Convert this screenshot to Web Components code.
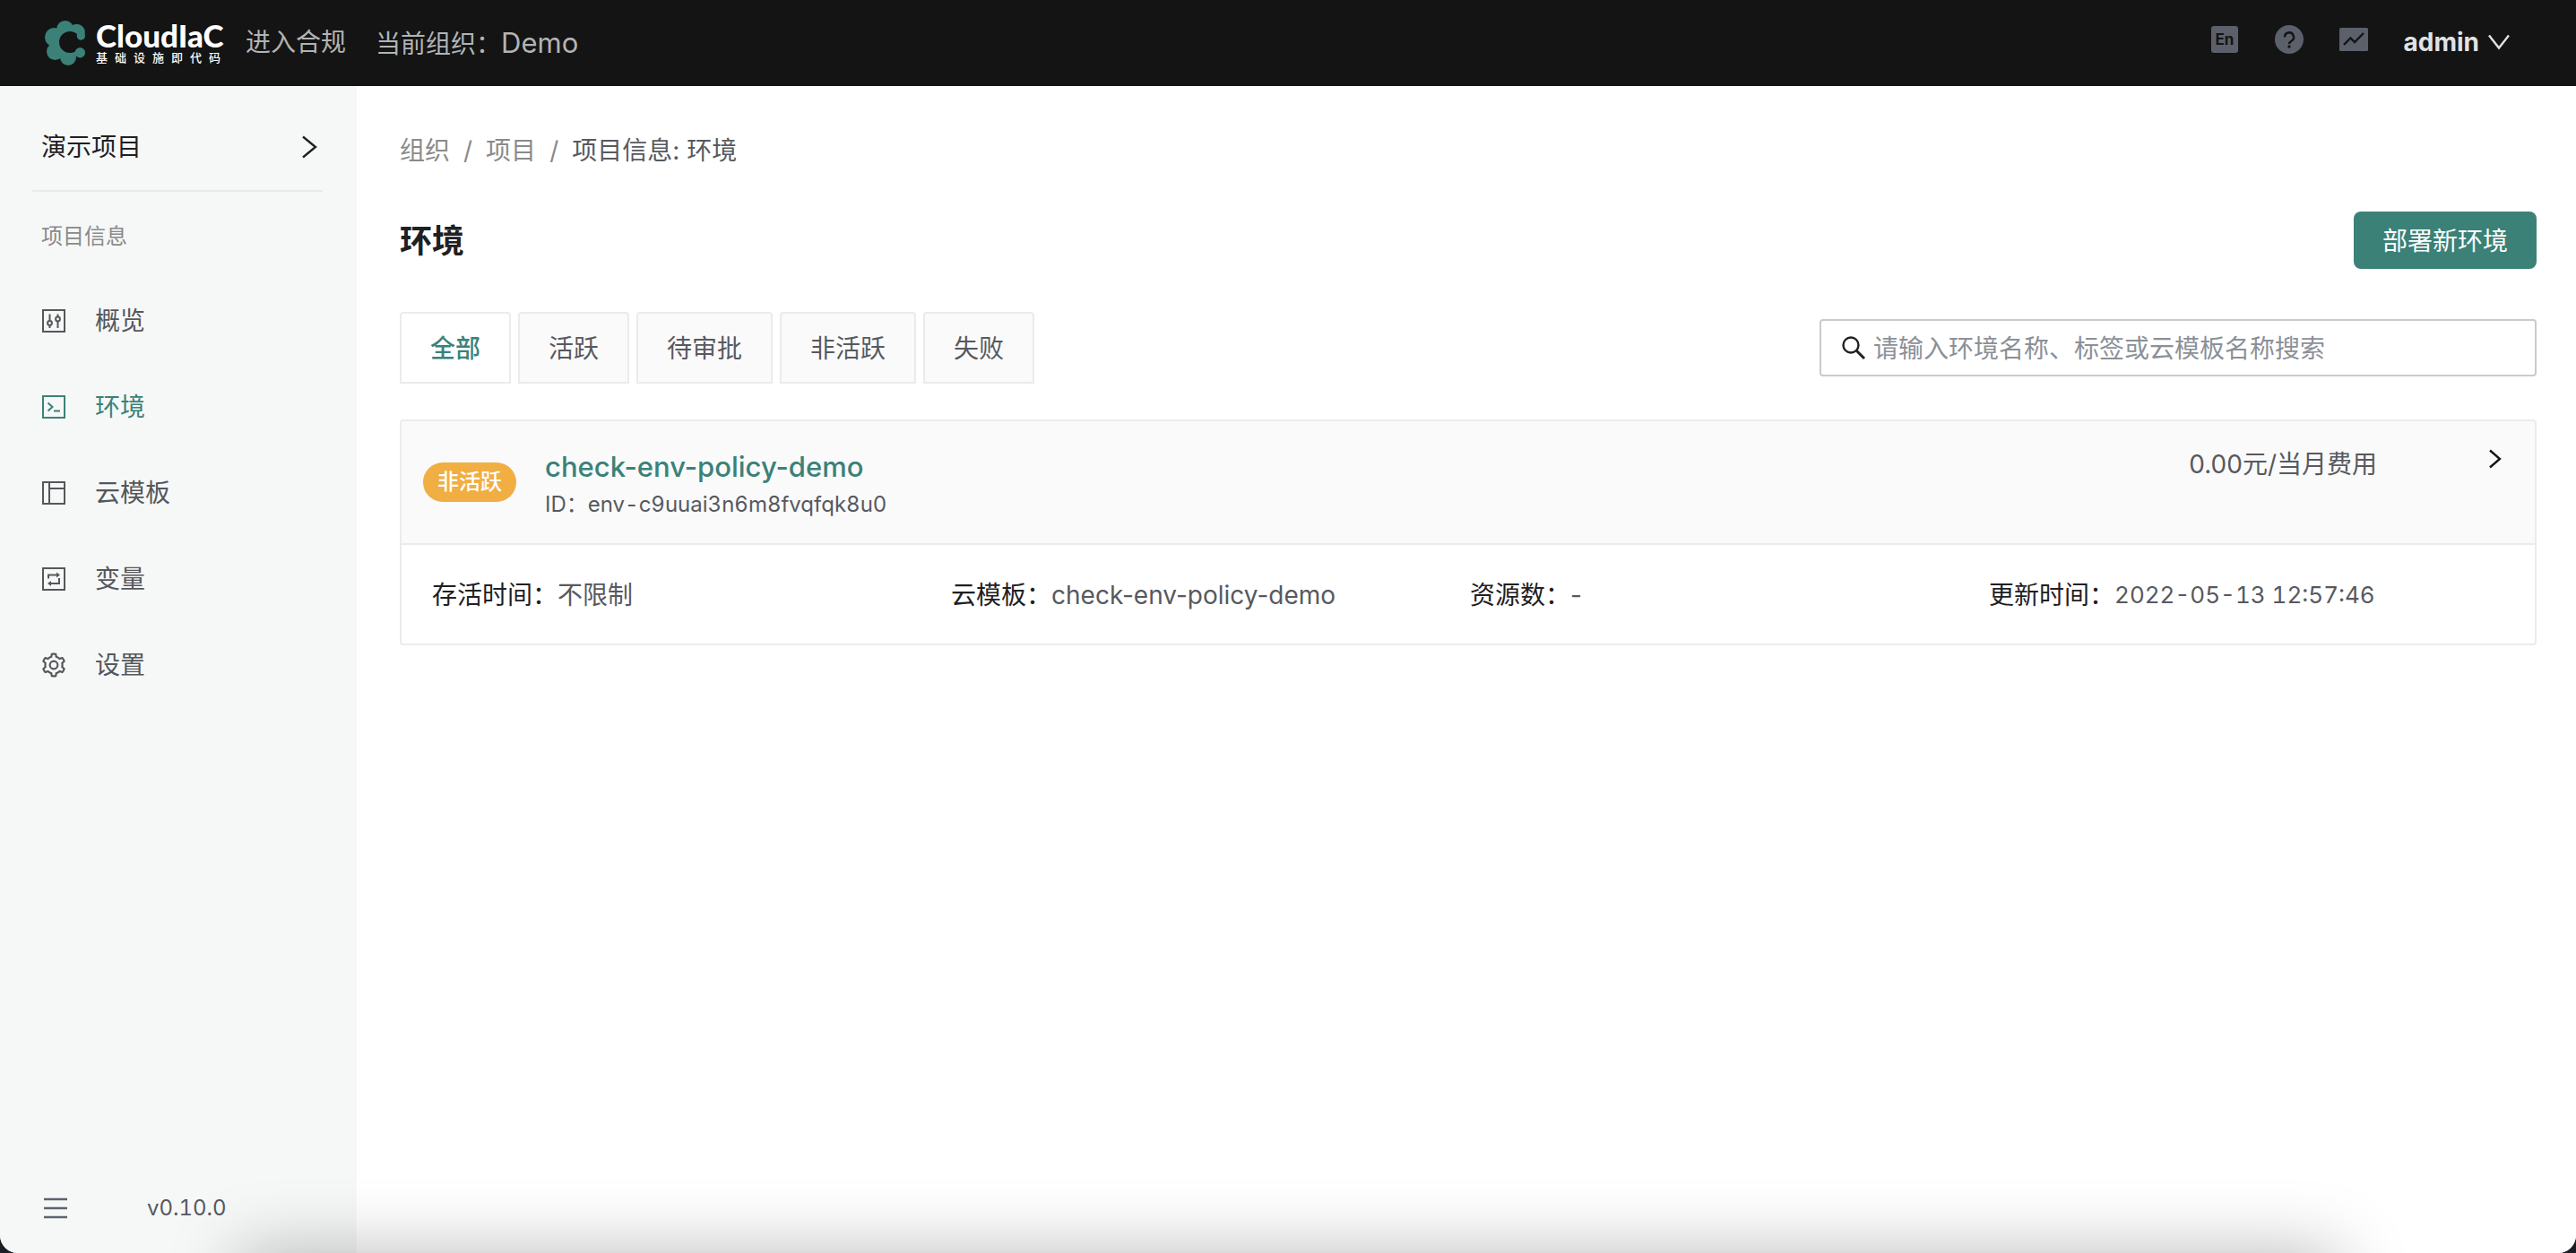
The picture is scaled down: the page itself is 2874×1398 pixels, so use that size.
<!DOCTYPE html>
<html lang="zh-CN">
<head>
<meta charset="utf-8">
<title>CloudIaC</title>
<style>
  html, body { margin: 0; height: 100%; }
  body {
    background: #1b1e25;
    font-family: Inter, "Noto Sans CJK SC", sans-serif;
    font-size: 28px;
    line-height: 44px;
    color: #57595f;
    --brand: #3b8178;
    --ink: #1f2022;
    --muted: #8a8a8a;
    --line: #ebebeb;
  }
</style>
</head>
<body>
<iac-app></iac-app>
<script>
const define = (name, html) => {
  const template = document.createElement('template');
  template.innerHTML = html;
  customElements.define(name, class extends HTMLElement {
    constructor() {
      super();
      this.attachShadow({ mode: 'open' }).append(template.content.cloneNode(true));
    }
  });
};

define('iac-logo', `
<style>
  :host { display: flex; align-items: center; gap: 11px; color: #fff; }
  svg { width: 46px; height: 50px; display: block; }
  .words { display: flex; flex-direction: column; width: 139px; padding-bottom: 2px; }
  .name { font: 900 35px/34px Lato, sans-serif; white-space: nowrap; }
  .sub { font-size: 13px; font-weight: 500; line-height: 16px; text-align: justify; text-align-last: justify; }
</style>
<svg viewBox="50 23 46 50" aria-hidden="true">
  <g fill="#3b8178">
    <circle cx="72.700" cy="32.500" r="9.500"/><circle cx="85.500" cy="36" r="9.300"/><circle cx="60.500" cy="41.500" r="10.500"/>
    <circle cx="61.500" cy="57.500" r="9.500"/><circle cx="76" cy="64" r="9"/><circle cx="76" cy="48" r="17"/>
  </g>
  <circle cx="78" cy="47" r="12" fill="#141414"/>
  <path fill="#141414" d="M84 43h12v11H84z"/>
  <circle cx="90.300" cy="40" r="4.700" fill="#3b8178"/>
  <circle cx="89.300" cy="58.700" r="5.700" fill="#3b8178"/>
</svg>
<div class="words"><span class="name">CloudIaC</span><span class="sub">基础设施即代码</span></div>
`);

define('iac-header', `
<style>
  :host { display: flex; align-items: center; justify-content: space-between; height: 96px; padding: 0 74px 0 50px; background: #141414; color: #b3b3b3; box-sizing: border-box; }
  .side { display: flex; align-items: center; }
  a { color: inherit; text-decoration: none; margin-left: 28px; padding-bottom: 2px; }
  .org { margin-left: 33px; }
  .org b { font-weight: 400; font-size: 31px; }
  button { border: 0; padding: 0; background: none; font: inherit; color: #5b606b; cursor: pointer; display: flex; align-items: center; }
  .tools { display: flex; align-items: center; gap: 40px; padding-bottom: 8px; }
  .tools svg { width: 32px; height: 32px; display: block; }
  .user { margin-left: 40px; padding-bottom: 2px; color: #e2e2e2; font-weight: 700; gap: 10px; }
</style>
<div class="side">
  <iac-logo></iac-logo>
  <a href="#compliance">进入合规</a>
  <span class="org">当前组织：<b>Demo</b></span>
</div>
<div class="side">
  <div class="tools">
    <button aria-label="English"><svg viewBox="0 0 32 32"><rect x="1" y="1" width="30" height="30" rx="3" fill="#5b606b"/><text x="16" y="22" text-anchor="middle" font-size="17" font-weight="700" fill="#141414">En</text></svg></button>
    <button aria-label="帮助"><svg viewBox="0 0 32 32"><circle cx="16" cy="16" r="16" fill="#5b606b"/><path d="M11 13.500a5 5 0 1 1 7.500 4.200c-1.800 1.100-2.500 1.700-2.500 3.300" fill="none" stroke="#141414" stroke-width="2.400"/><circle cx="16" cy="24" r="1.700" fill="#141414"/></svg></button>
    <button aria-label="监控"><svg viewBox="0 0 32 32"><rect y="3" width="32" height="26" rx="1.500" fill="#5b606b"/><path d="M5 22l7.500-7.500 4.500 4.500L27 9" fill="none" stroke="#141414" stroke-width="2.400"/></svg></button>
  </div>
  <button class="user">admin<svg width="24" height="18" viewBox="0 0 24 18" fill="none" stroke="#e2e2e2" stroke-width="2.400"><path d="M1 1.500l11 14 11-14"/></svg></button>
</div>
`);

define('nav-item', `
<style>
  :host { display: block; color: #55575a; }
  :host([active]) { color: var(--brand); }
  a { display: flex; align-items: center; gap: 32px; height: 96px; padding-left: 46px; color: inherit; text-decoration: none; }
  ::slotted(svg) { width: 28px; height: 28px; flex: none; }
</style>
<a href="#"><slot name="icon"></slot><span><slot></slot></span></a>
`);

define('side-nav', `
<style>
  :host { display: flex; flex-direction: column; width: 398px; flex: none; background: #f6f8f8; }
  .project { display: flex; align-items: center; justify-content: space-between; margin: 0 38px 0 36px; padding: 20px 6px 0 10px; height: 118px; box-sizing: border-box; border: 0; border-bottom: 2px solid #e8e9e9; background: none; font: inherit; color: var(--ink); }
  .group { padding: 28px 46px 24px; font-size: 24px; color: var(--muted); font-weight: 400; margin: 0; }
  nav svg { fill: none; stroke: currentColor; stroke-width: 2; }
  footer { margin-top: auto; display: flex; align-items: center; gap: 88px; padding: 0 48px 28px; font-size: 24px; font-variant-numeric: tabular-nums; }
  footer button { border: 0; padding: 0; background: none; display: flex; color: #5d646d; }
</style>
<button class="project">演示项目<svg width="18" height="26" viewBox="0 0 18 26" fill="none" stroke="currentColor" stroke-width="2.400"><path d="M2 1.500L16 13 2 24.500"/></svg></button>
<h2 class="group">项目信息</h2>
<nav>
  <nav-item><svg slot="icon" viewBox="0 0 28 28"><rect x="2" y="2" width="24" height="24"/><path d="M9.500 6.500v7.500M9.500 19v3M18.500 6.500v3M18.500 14v8"/><circle cx="9.500" cy="16.500" r="2.400"/><circle cx="18.500" cy="12" r="2.400"/></svg>概览</nav-item>
  <nav-item active><svg slot="icon" viewBox="0 0 28 28"><rect x="2" y="2" width="24" height="24"/><path d="M7.500 9.500l5 4.500-5 4.500M14 18.500h7"/></svg>环境</nav-item>
  <nav-item><svg slot="icon" viewBox="0 0 28 28"><rect x="2" y="2" width="24" height="24"/><path d="M9 2v24M9 9h17"/></svg>云模板</nav-item>
  <nav-item><svg slot="icon" viewBox="0 0 28 28"><rect x="2" y="2" width="24" height="24"/><path d="M8 13.500V9.500h10M20 13v6H9"/><path d="M17 6.500l4 3-4 3zM11 16l-4 3 4 3z" fill="currentColor" stroke="none"/></svg>变量</nav-item>
  <nav-item><svg slot="icon" viewBox="48 48 928 928" style="stroke:none;fill:currentColor"><path d="M924.800 625.700l-65.500-56c3.100-19 4.700-38.400 4.700-57.800s-1.600-38.800-4.700-57.800l65.500-56a32.030 32.030 0 009.300-35.200l-.9-2.600a443.740 443.740 0 00-79.700-137.900l-1.800-2.100a32.120 32.120 0 00-35.100-9.500l-81.300 28.900c-30-24.600-63.500-44-99.700-57.600l-15.700-85a32.050 32.050 0 00-25.800-25.700l-2.700-.5c-52.100-9.400-106.900-9.400-159 0l-2.700.5a32.050 32.050 0 00-25.800 25.700l-15.800 85.400a351.860 351.860 0 00-99 57.400l-81.900-29.100a32 32 0 00-35.100 9.500l-1.800 2.100a446.020 446.020 0 00-79.700 137.900l-.9 2.600c-4.500 12.500-.8 26.500 9.300 35.200l66.300 56.600c-3.100 18.800-4.600 38-4.600 57.100 0 19.200 1.500 38.400 4.600 57.100L99 625.500a32.030 32.030 0 00-9.300 35.200l.9 2.600c18.100 50.400 44.900 96.900 79.700 137.900l1.800 2.100a32.120 32.120 0 0035.100 9.500l81.900-29.100c29.800 24.500 63.100 43.900 99 57.400l15.800 85.400a32.050 32.050 0 0025.800 25.700l2.700.5a449.400 449.400 0 00159 0l2.700-.5a32.050 32.050 0 0025.800-25.700l15.700-85a350 350 0 0099.700-57.600l81.300 28.900a32 32 0 0035.100-9.500l1.800-2.100c34.800-41.100 61.600-87.500 79.700-137.900l.9-2.600c4.500-12.300.8-26.300-9.300-35zM788.300 465.900c2.500 15.100 3.800 30.600 3.800 46.100s-1.300 31-3.800 46.100l-6.600 40.100 74.700 63.900a370.030 370.030 0 01-42.600 73.600L721 702.800l-31.400 25.800c-23.900 19.600-50.500 35-79.300 45.800l-38.100 14.300-17.900 97a377.500 377.500 0 01-85 0l-17.900-97.200-37.800-14.500c-28.500-10.800-55-26.200-78.700-45.700l-31.400-25.900-93.400 33.200c-17-22.900-31.200-47.600-42.600-73.600l75.500-64.500-6.500-40c-2.400-14.900-3.700-30.300-3.700-45.500 0-15.300 1.200-30.600 3.700-45.500l6.500-40-75.500-64.500c11.300-26.100 25.600-50.700 42.600-73.600l93.400 33.200 31.400-25.900c23.700-19.500 50.200-34.900 78.700-45.700l37.900-14.300 17.900-97.200c28.100-3.200 56.800-3.200 85 0l17.900 97 38.100 14.300c28.700 10.800 55.400 26.200 79.300 45.800l31.400 25.800 92.800-32.900c17 22.900 31.200 47.600 42.600 73.600L781.800 426z"/><circle cx="512" cy="512" r="144" style="fill:none;stroke:currentColor;stroke-width:72"/></svg>设置</nav-item>
</nav>
<footer><button aria-label="收起菜单"><svg width="28" height="26" viewBox="0 0 28 26" stroke="currentColor" stroke-width="2.600"><path d="M1 3h26M1 13h26M1 23h26"/></svg></button><span>v0.10.0</span></footer>
`);

define('iac-breadcrumb', `
<style>
  :host { display: flex; gap: 15px; color: var(--muted); }
  a { color: inherit; text-decoration: none; }
  .current { color: #57595f; }
</style>
<a href="#org">组织</a><span>/</span><a href="#project">项目</a><span>/</span><span class="current">项目信息: 环境</span>
`);

define('filter-tab', `
<style>
  :host { display: block; }
  button { height: 80px; padding: 2px 32px 0; border: 2px solid var(--line); border-radius: 4px 4px 0 0; background: #fafafa; color: inherit; font: inherit; display: block; }
  :host([active]) button { background: #fff; color: var(--brand); font-weight: 500; }
</style>
<button><slot></slot></button>
`);

define('search-box', `
<style>
  :host { display: block; width: 800px; }
  label { display: flex; align-items: center; gap: 8px; height: 64px; box-sizing: border-box; border: 2px solid #c9cacd; border-radius: 4px; padding: 0 22px; background: #fff; }
  svg { width: 28px; height: 28px; flex: none; }
  input { flex: 1; min-width: 0; border: 0; outline: 0; padding: 2px 0 0; background: none; font: inherit; height: 44px; color: var(--ink); }
  input::placeholder { color: #8b9098; opacity: 1; }
</style>
<label><svg viewBox="0 0 28 28" fill="none" stroke="#1f2022" aria-hidden="true"><circle cx="11" cy="11" r="8.500" stroke-width="2.400"/><path d="M17 17l9 9" stroke-width="3"/></svg><input type="text" aria-label="搜索环境" placeholder="请输入环境名称、标签或云模板名称搜索"></label>
`);

define('info-item', `
<style>
  :host { display: flex; flex: 1 1 0; min-width: 0; white-space: nowrap; }
  .label { color: var(--ink); }
  :host([time]) .value { font-size: 26px; font-variant-numeric: tabular-nums; }
</style>
<span class="label"><slot name="label"></slot></span><span class="value"><slot></slot></span>
`);

define('env-card', `
<style>
  :host { display: block; border: 2px solid var(--line); border-radius: 4px; }
  header { display: flex; align-items: center; gap: 32px; height: 136px; padding: 0 34px 0 24px; background: #fafafa; border-bottom: 2px solid var(--line); }
  .pill { height: 44px; line-height: 44px; padding: 0 16px; border-radius: 22px; background: #f0ae43; color: #fff; font-size: 24px; font-weight: 500; }
  .who { flex: 1; display: flex; flex-direction: column; padding-top: 6px; }
  a { color: var(--brand); text-decoration: none; font-size: 31px; font-weight: 500; }
  .id { font-size: 24px; line-height: 40px; font-variant-numeric: tabular-nums; }
  .cost { align-self: flex-start; padding-top: 26px; }
  .open { align-self: flex-start; margin: 30px 0 0 90px; border: 0; padding: 0; background: none; display: flex; color: #141414; }
  .info { display: flex; height: 108px; align-items: center; padding: 2px 30px 0 34px; }
</style>
<header>
  <span class="pill">非活跃</span>
  <div class="who"><a href="#env">check-env-policy-demo</a><span class="id">ID：env-c9uuai3n6m8fvqfqk8u0</span></div>
  <span class="cost">0.00元/当月费用</span>
  <button class="open" aria-label="展开"><svg width="20" height="24" viewBox="0 0 20 24" fill="none" stroke="currentColor" stroke-width="2.400"><path d="M4 2.500l11 9.500L4 21.500"/></svg></button>
</header>
<div class="info">
  <info-item><span slot="label">存活时间：</span>不限制</info-item>
  <info-item><span slot="label">云模板：</span>check-env-policy-demo</info-item>
  <info-item><span slot="label">资源数：</span>-</info-item>
  <info-item time><span slot="label">更新时间：</span>2022-05-13 12:57:46</info-item>
</div>
`);

define('env-page', `
<style>
  :host { display: block; flex: 1; min-width: 0; padding: 50px 44px 0 48px; background: #fff; }
  .row { display: flex; align-items: center; justify-content: space-between; }
  .title { margin-top: 46px; }
  h1 { margin: 0; padding-top: 2px; font-size: 36px; font-weight: 600; line-height: 48px; color: var(--ink); }
  .deploy { height: 64px; padding: 2px 32px 0; border: 0; border-radius: 8px; background: var(--brand); color: #fff; font: inherit; }
  .filter { margin: 48px 0 40px; }
  .tabs { display: flex; gap: 8px; }
</style>
<iac-breadcrumb></iac-breadcrumb>
<div class="row title"><h1>环境</h1><button class="deploy">部署新环境</button></div>
<div class="row filter">
  <div class="tabs"><filter-tab active>全部</filter-tab><filter-tab>活跃</filter-tab><filter-tab>待审批</filter-tab><filter-tab>非活跃</filter-tab><filter-tab>失败</filter-tab></div>
  <search-box></search-box>
</div>
<env-card></env-card>
`);

define('iac-app', `
<style>
  :host { display: flex; flex-direction: column; min-height: 100vh; position: relative; overflow: hidden; border-radius: 0 0 20px 20px; background: #fff; }
  .body { display: flex; flex: 1; }
  .shade { position: absolute; left: 265px; right: 265px; top: 100%; height: 100px; box-shadow: 0 0 80px rgba(0,0,0,.28); pointer-events: none; }
</style>
<iac-header></iac-header>
<div class="body"><side-nav></side-nav><env-page></env-page></div>
<div class="shade"></div>
`);
</script>
</body>
</html>
